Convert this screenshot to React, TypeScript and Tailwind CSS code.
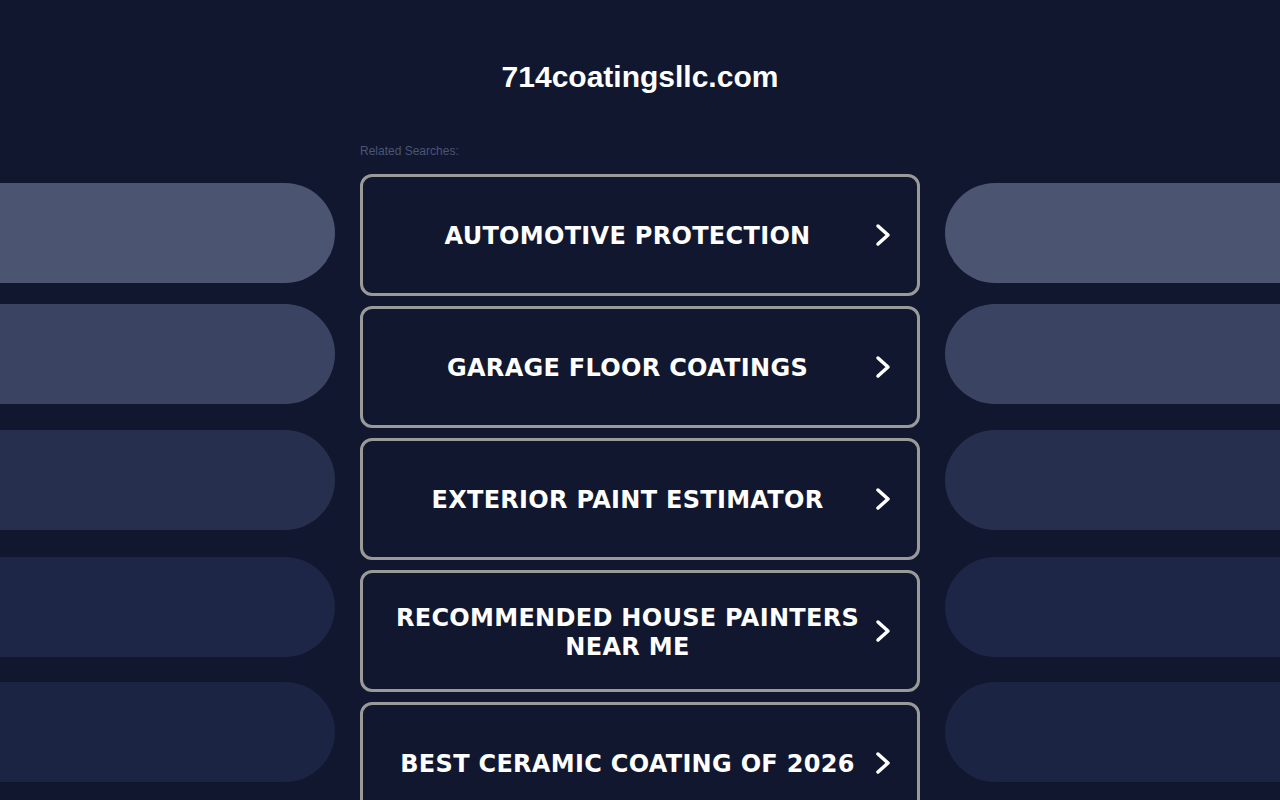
import React from 'react';

const searches = [
  'AUTOMOTIVE PROTECTION',
  'GARAGE FLOOR COATINGS',
  'EXTERIOR PAINT ESTIMATOR',
  'RECOMMENDED HOUSE PAINTERS NEAR ME',
  'BEST CERAMIC COATING OF 2026',
];

// side pills: colour and top spacing
const pills = [
  { bg: 'bg-[#4b5572]', mt: 'mt-0' },
  { bg: 'bg-[#3a4462]', mt: 'mt-[21px]' },
  { bg: 'bg-[#262f4d]', mt: 'mt-[26px]' },
  { bg: 'bg-[#1d2646]', mt: 'mt-[27px]' },
  { bg: 'bg-[#1c2444]', mt: 'mt-[25px]' },
];

function Chevron() {
  return (
    <svg width="16" height="24" viewBox="0 0 16 24" fill="none" className="shrink-0">
      <polyline
        points="3,3 13,12 3,21"
        stroke="white"
        strokeWidth="3.5"
        strokeLinecap="round"
        strokeLinejoin="round"
      />
    </svg>
  );
}

function PillColumn({ side }: { side: 'left' | 'right' }) {
  return (
    <div className="flex flex-col pt-[41px]">
      {pills.map((p, i) => (
        <div
          key={i}
          className={`h-[100px] ${p.bg} ${p.mt} ${side === 'left' ? 'rounded-r-[50px]' : 'rounded-l-[50px]'}`}
        />
      ))}
    </div>
  );
}

export default function App() {
  return (
    <div className="min-h-screen w-full overflow-hidden bg-[#11172e] font-['Liberation_Sans',Arial,sans-serif]">
      <h1 className="pt-[59px] text-center text-[30px] font-bold leading-[36px] text-white">
        714coatingsllc.com
      </h1>

      <div className="mt-[47px] grid grid-cols-[335px_560px_335px] gap-x-[25px]">
        <PillColumn side="left" />

        <div className="flex flex-col">
          <p className="h-4 pt-px text-[12px] leading-4 text-[#4a5578]">Related Searches:</p>
          <div className="mt-4 flex flex-col gap-[10px]">
            {searches.map((s) => (
              <a
                key={s}
                href="#"
                className="flex h-[122px] items-center rounded-[12px] border-[3px] border-[#9a9a9a] bg-[#11172e] pl-[17px] pr-[26px]"
              >
                <span className="flex-1 pt-[3px] text-center font-['DejaVu_Sans',Verdana,sans-serif] text-[24px] font-bold leading-[29px] tracking-[0.3px] text-white">
                  {s}
                </span>
                <Chevron />
              </a>
            ))}
          </div>
        </div>

        <PillColumn side="right" />
      </div>
    </div>
  );
}
